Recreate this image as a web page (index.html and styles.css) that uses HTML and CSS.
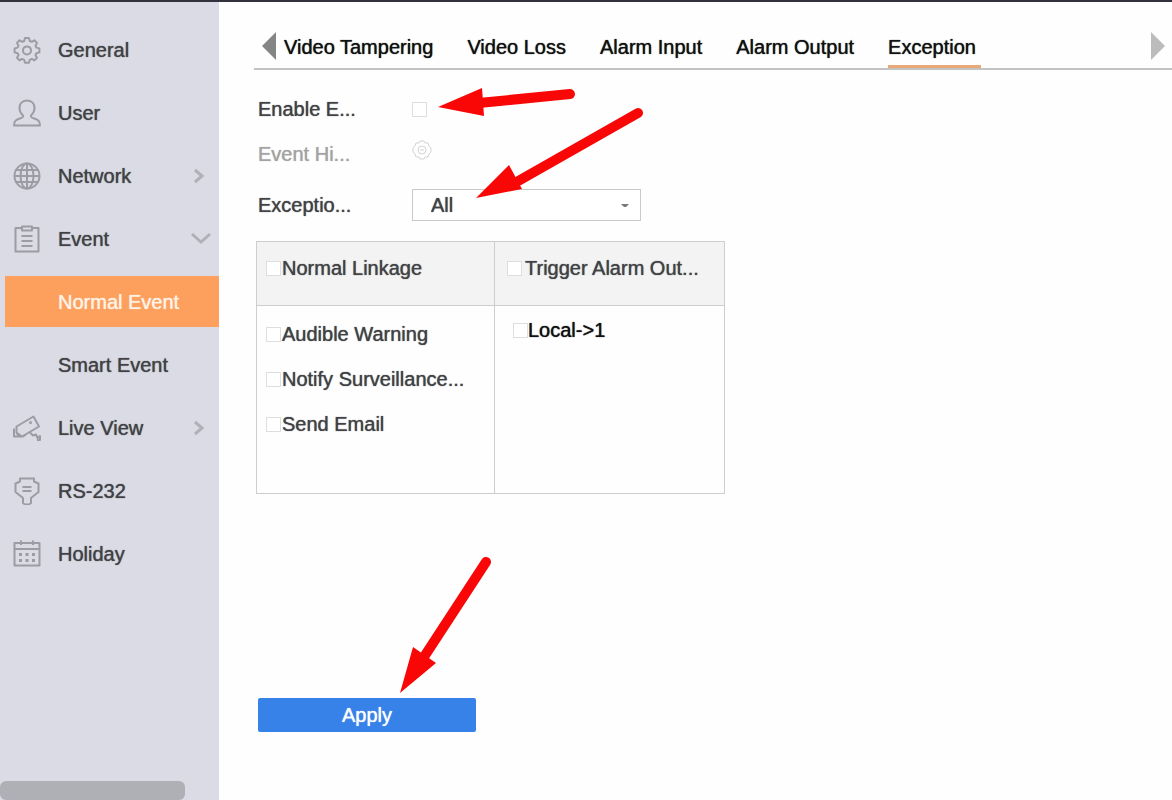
FILE: index.html
```html
<!DOCTYPE html>
<html lang="en">
<head>
<meta charset="utf-8">
<meta name="viewport" content="width=device-width, initial-scale=1">
<title>Exception</title>
<link rel="stylesheet" href="styles.css">
</head>
<body>
<div class="app">
  <aside class="sidebar">
    <nav class="nav">
      <a class="nav-item" href="#">
        <svg class="icon" viewBox="0 0 28 28"><path d="M12 2h4l.8 3 2 .8 2.600-1.500 2.600 2.600-1.500 2.700.9 2 3 .8v4l-3 .8-.9 2 1.500 2.600-2.600 2.600-2.600-1.500-2 .9-.8 3h-4l-.8-3-2-.9-2.600 1.500-2.600-2.600 1.500-2.600-.9-2-3-.8v-4l3-.8.9-2-1.500-2.700 2.600-2.600 2.600 1.500 2-.8z"/><circle cx="14" cy="14.400" r="4"/></svg>
        <span>General</span>
      </a>
      <a class="nav-item" href="#">
        <svg class="icon" viewBox="0 0 28 28"><path d="M14 1.500c-5 0-7.500 3.500-7.500 7.500 0 3 1.300 5.500 3.300 7.200.8 1.500.1 2.300-2.300 3C3 20.500 1 22 1 26.500h26c0-4.500-2-6-6.500-7.300-2.400-.7-3.100-1.500-2.300-3 2-1.700 3.300-4.200 3.300-7.200 0-4-2.500-7.500-7.500-7.500z"/></svg>
        <span>User</span>
      </a>
      <a class="nav-item" href="#">
        <svg class="icon" viewBox="0 0 28 28"><circle cx="14" cy="14" r="12.500"/><ellipse cx="14" cy="14" rx="6.500" ry="12.500"/><path d="M14 1.500v25M1.500 14h25M3.500 8h21M3.500 20h21"/></svg>
        <span>Network</span>
        <svg class="chevron" viewBox="0 0 20 20"><path d="M6 4l7 6-7 6"/></svg>
      </a>
      <a class="nav-item" href="#">
        <svg class="icon" viewBox="0 0 28 28"><path d="M9 3H2.500v23.500h23V3H19M9 1.500h10v4H9zM8.500 11h11M8.500 16h11M8.500 21h11"/></svg>
        <span>Event</span>
        <svg class="chevron chevron-open" viewBox="0 0 20 20"><path d="M1 5l9 8 9-8"/></svg>
      </a>
      <a class="nav-item nav-sub selected" href="#" aria-current="page"><span>Normal Event</span></a>
      <a class="nav-item nav-sub" href="#"><span>Smart Event</span></a>
      <a class="nav-item" href="#">
        <svg class="icon" viewBox="0 0 28 28"><path d="M3.500 12.500L20.500 2.500l5.500 10L9 22.500 3.500 18.500zM1 14.500v8h6M3.500 18.500l2.500 4h4l3-2M17 18.500l3 3 3-1 1.500 3.500 2.500-2v4h-3"/><circle cx="17.500" cy="8.500" r=".6"/></svg>
        <span>Live View</span>
        <svg class="chevron" viewBox="0 0 20 20"><path d="M6 4l7 6-7 6"/></svg>
      </a>
      <a class="nav-item" href="#">
        <svg class="icon" viewBox="0 0 28 28"><path d="M7 1.500h14v3l4.500 2V15l-7.500 6v5l-2 1.500h-4L10 26v-5l-7.500-6V6.500l4.500-2zM9.500 10h9M9.500 14h9"/></svg>
        <span>RS-232</span>
      </a>
      <a class="nav-item" href="#">
        <svg class="icon" viewBox="0 0 28 28"><path d="M1.500 3h25v22.500h-25zM1.500 9h25M8 .5V5M20 .5V5"/><path class="dots" d="M6 14.500h3M12.500 14.500h3M19 14.500h3M6 20.500h3M12.500 20.500h3M19 20.500h3"/></svg>
        <span>Holiday</span>
      </a>
    </nav>
    <div class="scroll-thumb"></div>
  </aside>

  <main class="main">
    <div class="tab-bar">
      <button class="tab-arrow" type="button" aria-label="Previous tabs"><svg viewBox="0 0 14 28"><path d="M14 0v28L0 14z"/></svg></button>
      <nav class="tabs">
        <a class="tab" href="#">Video Tampering</a>
        <a class="tab" href="#">Video Loss</a>
        <a class="tab" href="#">Alarm Input</a>
        <a class="tab" href="#">Alarm Output</a>
        <a class="tab active" href="#" aria-current="page">Exception</a>
      </nav>
      <button class="tab-arrow next" type="button" aria-label="Next tabs"><svg viewBox="0 0 14 28"><path d="M0 0v28l14-14z"/></svg></button>
    </div>

    <form class="content">
      <div class="fields">
        <label for="enable">Enable E...</label>
        <input class="check" type="checkbox" id="enable">
        <span class="disabled">Event Hi...</span>
        <button class="gear" type="button" disabled aria-label="Event hint settings"><svg viewBox="0 0 20 20"><path d="M8 1h4l1 2 3 0 1 3 2 2v4l-2 2-1 3h-3l-1 2H8l-1-2H4l-1-3-2-2V8l2-2 1-3h3z"/><circle cx="10" cy="10" r="4"/><path d="M8 10h4"/></svg></button>
        <label for="type">Exceptio...</label>
        <div class="select-wrap">
          <select id="type"><option>All</option></select>
          <svg class="caret" viewBox="0 0 8 4"><path d="M0 0h8L5 3H3z"/></svg>
        </div>
      </div>

      <table class="linkage">
        <thead>
          <tr>
            <th><label class="option"><input class="check" type="checkbox">Normal Linkage</label></th>
            <th class="trigger"><label class="option"><input class="check" type="checkbox">Trigger Alarm Out...</label></th>
          </tr>
        </thead>
        <tbody>
          <tr>
            <td>
              <div class="options">
                <label class="option"><input class="check" type="checkbox">Audible Warning</label>
                <label class="option"><input class="check" type="checkbox">Notify Surveillance...</label>
                <label class="option"><input class="check" type="checkbox">Send Email</label>
              </div>
            </td>
            <td class="outputs"><label class="option"><input class="check" type="checkbox">Local-&gt;1</label></td>
          </tr>
        </tbody>
      </table>

      <button class="apply" type="button">Apply</button>
    </form>

    <svg class="arrows" viewBox="0 0 440 620" aria-hidden="true">
      <path class="shaft" d="M351 14L260 23M419 33L294 104M267 482L203 580"/>
      <path class="head" d="M219 27l44-19 2 28zM257 118l33-33 13 24zM181 613l13-46 23 16z"/>
    </svg>
  </main>
</div>
</body>
</html>
```

FILE: styles.css
```css
* {
  box-sizing: border-box;
}

body {
  margin: 0;
  background: #fefefe;
  color: #424246;
  font: 20px/24px "Liberation Sans", Arial, sans-serif;
  text-shadow: 0 0 1px currentColor;
}

button,
select {
  font: inherit;
  color: inherit;
  text-shadow: inherit;
}

a {
  color: inherit;
  text-decoration: none;
}

.app {
  display: flex;
  min-height: 100vh;
  border-top: 2px solid #34313e;
}

.sidebar {
  display: flex;
  flex-direction: column;
  flex: 0 0 219px;
  padding-top: 22px;
  background: #dbdbe5;
}

.nav {
  display: flex;
  flex-direction: column;
  gap: 12px;
  padding-left: 5px;
}

.nav-item {
  display: flex;
  align-items: center;
  height: 51px;
  padding: 0 10px 0 8px;
}

.nav-sub {
  padding-left: 53px;
}

.selected {
  background: #fda05e;
  color: #fff3e6;
}

.icon {
  width: 28px;
  height: 28px;
  margin-right: 17px;
  fill: none;
  stroke: #9c9ca4;
  stroke-width: 2;
  stroke-linejoin: round;
}

.dots {
  stroke-width: 3;
}

.chevron {
  width: 20px;
  height: 20px;
  margin-left: auto;
  fill: none;
  stroke: #b0b0b7;
  stroke-width: 3;
}

.nav-item .chevron-open {
  margin-right: -2px;
}

.scroll-thumb {
  width: 185px;
  height: 19px;
  margin-top: auto;
  border-radius: 6px;
  background: #afafb6;
}

.main {
  position: relative;
  flex: 1;
  min-width: 0;
  padding-left: 35px;
}

.tab-bar {
  display: flex;
  align-items: flex-end;
  height: 68px;
  padding: 0 7px 0 8px;
  border-bottom: 2px solid #c2c2c2;
}

.tab-arrow {
  width: 14px;
  height: 28px;
  margin-bottom: 8px;
  padding: 0;
  border: 0;
  background: none;
  fill: #858585;
}

.tab-arrow svg {
  display: block;
}

.next {
  margin-left: auto;
  fill: #bcbcbc;
}

.tabs {
  display: flex;
  gap: 34px;
  padding-left: 8px;
}

.tab {
  height: 33px;
  color: #111;
  white-space: nowrap;
}

.active {
  padding-right: 5px;
  border-bottom: 3px solid #e8a877;
}

.content {
  padding: 22px 0 0 2px;
}

.fields {
  display: grid;
  grid-template-columns: 154px 229px;
  grid-template-rows: 34px 56px 46px;
  align-items: center;
  padding-left: 2px;
}

.check {
  appearance: none;
  flex: none;
  width: 15px;
  height: 15px;
  margin: 0;
  border: 1px solid #dedede;
  background: #fff;
}

.disabled {
  color: #a3a3a3;
}

.gear {
  width: 20px;
  height: 20px;
  margin-bottom: 8px;
  padding: 0;
  border: 0;
  background: none;
  fill: none;
  stroke: #d3d3d3;
}

.gear svg {
  display: block;
}

.select-wrap {
  position: relative;
}

.select-wrap select {
  display: block;
  appearance: none;
  width: 100%;
  height: 32px;
  padding: 0 18px;
  border: 1px solid #c9c9c9;
  border-radius: 0;
  background: #fff;
}

.caret {
  position: absolute;
  top: 15px;
  right: 12px;
  width: 8px;
  height: 4px;
  fill: #777;
}

.linkage {
  width: 469px;
  margin-top: 13px;
  border-collapse: collapse;
  table-layout: fixed;
}

.linkage th,
.linkage td {
  width: 238px;
  padding: 14px 9px;
  border: 1px solid #cecece;
  text-align: left;
  vertical-align: top;
  font-weight: normal;
}

.linkage th {
  height: 64px;
  background: #f3f3f3;
}

.linkage td {
  height: 188px;
}

.linkage .trigger,
.linkage .outputs {
  width: auto;
}

.linkage .trigger {
  padding-left: 12px;
}

.linkage .outputs {
  padding: 12px 18px;
  color: #111;
}

.option {
  display: flex;
  align-items: center;
  gap: 1px;
  white-space: nowrap;
}

.trigger .option {
  gap: 3px;
}

.outputs .option {
  gap: 0;
}

.options {
  display: grid;
  gap: 21px;
  padding-top: 2px;
}

.apply {
  display: block;
  width: 218px;
  height: 34px;
  margin: 204px 0 0 2px;
  padding: 0;
  border: 0;
  border-radius: 2px;
  background: #3782e9;
  color: #fff;
}

.arrows {
  position: absolute;
  top: 78px;
  left: 0;
  width: 440px;
  height: 620px;
  pointer-events: none;
}

.shaft {
  fill: none;
  stroke: #f90707;
  stroke-width: 10;
  stroke-linecap: round;
}

.head {
  fill: #f90707;
}
```
